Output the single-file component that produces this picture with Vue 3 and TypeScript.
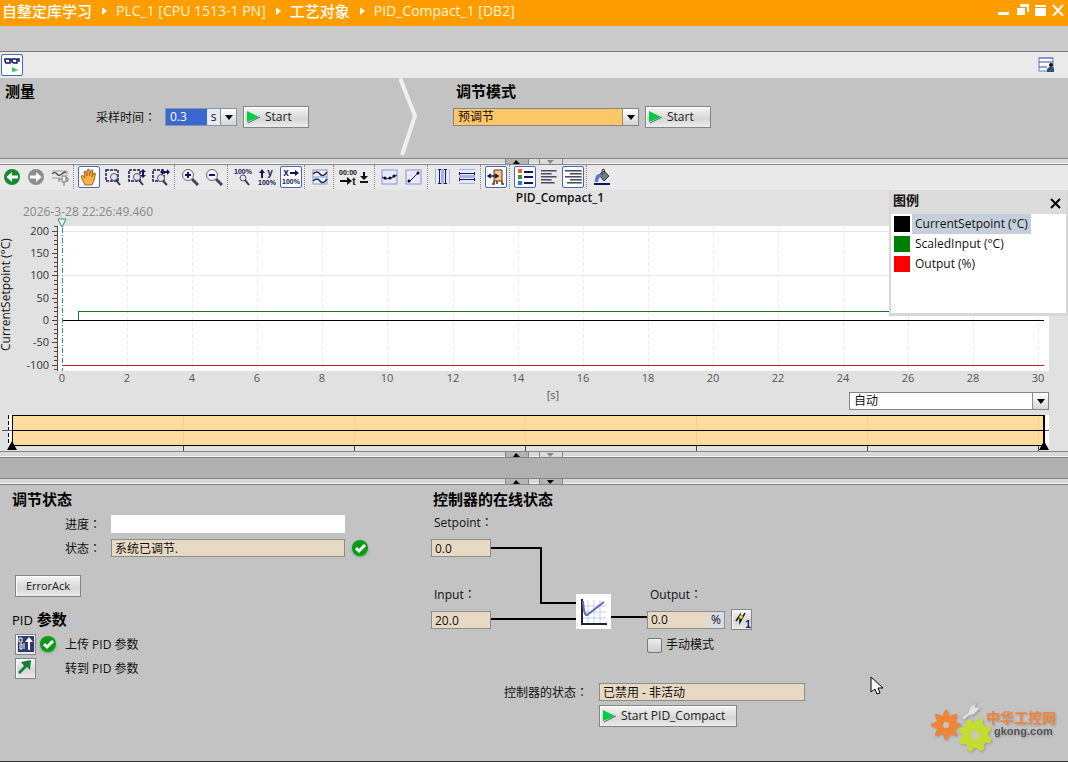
<script setup lang="ts">
import { computed, onBeforeUnmount, onMounted, ref } from 'vue'

interface Series {
  name: string
  color: string
}

const crumbs = ['自整定库学习', 'PLC_1 [CPU 1513-1 PN]', '工艺对象', 'PID_Compact_1 [DB2]']
const series: Series[] = [
  { name: 'CurrentSetpoint (°C)', color: '#000000' },
  { name: 'ScaledInput (°C)', color: '#008000' },
  { name: 'Output (%)', color: '#ff0000' },
]

const sampleTime = ref('0.3')
const tuningMode = ref('预调节')
const viewMode = ref('自动')
const manual = ref(false)
const selected = ref(0)

const chart = ref<HTMLElement | null>(null)
const width = ref(1068)
let observer: ResizeObserver | undefined

onMounted(() => {
  if (!chart.value) return
  width.value = chart.value.clientWidth
  observer = new ResizeObserver(() => {
    if (chart.value) width.value = chart.value.clientWidth
  })
  observer.observe(chart.value)
})
onBeforeUnmount(() => observer?.disconnect())

const left = 62
const right = computed(() => width.value - 24)
const plotEnd = computed(() => width.value - 19)
const x = (t: number) => Math.round(left + (t / 30.17) * (right.value - left))
const y = (v: number) => Math.round(130 - v * 0.4467)

const xTicks = Array.from({ length: 16 }, (_, i) => i * 2)
const yTicks = [200, 150, 100, 50, 0, -50, -100]
const minorTicks = Array.from({ length: 33 }, (_, i) => 210 - i * 10)
const overviewTicks = computed(() => [1, 2, 3, 4, 5, 6].map((i) => Math.round(12 + (i * (right.value - 12)) / 6.035)))
</script>

<template>
  <main class="app">
    <header class="titlebar">
      <nav class="crumbs">
        <template v-for="(c, i) in crumbs" :key="c">
          <svg v-if="i" class="sep" width="6" height="10" viewBox="0 0 6 10"><path d="M0 1l5 4-5 4z" fill="#fff" /></svg>
          <span :class="i % 2 ? 'latin' : 'han'">{{ c }}</span>
        </template>
      </nav>
      <div class="winbtns">
        <button aria-label="最小化"><svg width="16" height="16"><path d="M2 12h11v3H2z" fill="#fff" /></svg></button>
        <button aria-label="浮动"><svg width="16" height="16"><path d="M6 4h9v8h-2V7H6zM3 8h8v7H3z" fill="#fff" /></svg></button>
        <button aria-label="最大化"><svg width="16" height="16"><path d="M3 5h11v2H3zM3 8h11v8H3z" fill="#fff" /></svg></button>
        <button aria-label="关闭"><svg width="16" height="16"><path d="M3 5l10 11M13 5L3 16" stroke="#fff" stroke-width="2" /></svg></button>
      </div>
    </header>
    <div class="band"></div>
    <div class="bar">
      <button class="tool on" aria-label="全部监视">
        <svg width="18" height="18" viewBox="0 0 18 18">
          <path d="M2 3h5v4H3L2 5zM9 3h4l1 1v3h-3L9 6zM7 4h2M14 3h2v3" fill="none" stroke="#15155c" stroke-width="1.5" />
          <path d="M9 11l6 3-6 2z" fill="#3c6" /><path d="M9 16l6-2" stroke="#9b8" stroke-width="1" />
        </svg>
      </button>
      <button class="plain" aria-label="保存窗口设置">
        <svg width="18" height="18" viewBox="0 0 18 18">
          <rect x="2" y="2" width="14" height="13" fill="#fff" stroke="#667ab8" />
          <path d="M2 6h14M2 11h8" stroke="#334d9c" /><path d="M2 2h14" stroke="#7767c8" />
          <circle cx="14" cy="9" r="2" fill="#111" /><path d="M10 16v-3l2-2h4l1 2v3z" fill="#2c5288" />
        </svg>
      </button>
    </div>

    <section class="top">
      <div class="measure">
        <h2>测量</h2>
        <div class="row sample">
          <label for="sample">采样时间<i>：</i></label>
          <div class="num">
            <input id="sample" v-model="sampleTime" /><span>s</span>
            <button aria-label="选择采样时间"><svg width="8" height="5"><path d="M0 0h8L4 5z" /></svg></button>
          </div>
          <button class="btn start"><svg width="14" height="14"><path d="M1 1l12 6-12 5z" fill="#0c4" /><path d="M2 13l12-6" stroke="#567" /></svg>Start</button>
        </div>
      </div>
      <svg class="chevron" width="18" height="78" viewBox="0 0 18 78"><path d="M1 0l15 38-13 39" fill="none" stroke="#efefef" stroke-width="4" /></svg>
      <div class="mode">
        <h2>调节模式</h2>
        <div class="row">
          <div class="combo orange">
            <select v-model="tuningMode" aria-label="调节模式"><option>预调节</option><option>精确调节</option></select>
            <span class="drop"><svg width="8" height="5"><path d="M0 0h8L4 5z" /></svg></span>
          </div>
          <button class="btn start"><svg width="14" height="14"><path d="M1 1l12 6-12 5z" fill="#0c4" /><path d="M2 13l12-6" stroke="#567" /></svg>Start</button>
        </div>
      </div>
    </section>

    <div class="split">
      <button aria-label="向上"><svg width="8" height="4"><path d="M0 4h7L3 0z" /></svg></button>
      <button class="off" aria-label="向下"><svg width="8" height="4"><path d="M0 0h7L3 4z" fill="#888" /></svg></button>
    </div>

    <div class="tools">
      <div class="group">
        <button class="tool" aria-label="后退"><svg viewBox="0 0 18 18"><circle cx="9" cy="9" r="8" fill="#178a2e" /><path d="M15 7.500H9V4L3.500 9 9 14v-3.500h6z" fill="#fff" /></svg></button>
        <button class="tool" aria-label="前进"><svg viewBox="0 0 18 18"><circle cx="9" cy="9" r="8" fill="#8e8e8e" /><path d="M3 7.500h6V4l5.500 5L9 14v-3.500H3z" fill="#fff" /></svg></button>
        <button class="tool" aria-label="固定曲线"><svg viewBox="0 0 18 18"><path d="M1 3h15v5M1 10h6" fill="none" stroke="#999" /><path d="M1 6q3-3 5 0t6-1l3-1" fill="none" stroke="#555" stroke-width="1.500" /><path d="M8 9v5M8 11h3M11 8h4v6h-4zM15 10h2v3h-2M13 14v4" fill="#eee" stroke="#777" /></svg></button>
      </div>
      <i class="bar-sep"></i>
      <div class="group">
        <button class="tool on" aria-label="移动视图"><svg viewBox="0 0 18 18"><path d="M5 17L2 11 1 8l2-.5L5 10 4 4l1.500-1L7 8V2l2-1 .5 7L11 2l2 .5L12 9l1.500-4 2 .5-1.500 7-2 4.500z" fill="#f4b24a" stroke="#a4661c" /></svg></button>
        <button class="tool" aria-label="缩放选区"><svg viewBox="0 0 18 18"><rect x="2" y="2" width="12" height="11" fill="none" stroke="#15155c" stroke-width="1.500" stroke-dasharray="3 1" /><circle cx="10" cy="9" r="3.500" fill="#dfe6f4" stroke="#556" /><path d="M12 12l4 5" stroke="#334" stroke-width="2" /></svg></button>
        <button class="tool" aria-label="垂直缩放选区"><svg viewBox="0 0 18 18"><rect x="1" y="2" width="11" height="11" fill="none" stroke="#15155c" stroke-width="1.500" stroke-dasharray="3 1" /><circle cx="9" cy="9" r="3.500" fill="#dfe6f4" stroke="#556" /><path d="M11 12l4 5" stroke="#334" stroke-width="2" /><path d="M15 1l3 3h-2v3h2l-3 3-3-3h2V4h-2z" fill="#15155c" /></svg></button>
        <button class="tool" aria-label="水平缩放选区"><svg viewBox="0 0 18 18"><rect x="1" y="2" width="11" height="11" fill="none" stroke="#15155c" stroke-width="1.500" stroke-dasharray="3 1" /><circle cx="9" cy="10" r="3.500" fill="#dfe6f4" stroke="#556" /><path d="M11 13l4 4" stroke="#334" stroke-width="2" /><path d="M8 4l3-3v2h4V1l3 3-3 3V5h-4v2z" fill="#15155c" /></svg></button>
      </div>
      <i class="bar-sep"></i>
      <div class="group">
        <button class="tool" aria-label="放大"><svg viewBox="0 0 18 18"><path d="M11 11l6 6" stroke="#446" stroke-width="3" /><circle cx="7" cy="7" r="5.500" fill="#eef2ff" stroke="#667" /><path d="M4 7h6M7 4v6" stroke="#15155c" stroke-width="2" /></svg></button>
        <button class="tool" aria-label="缩小"><svg viewBox="0 0 18 18"><path d="M11 11l6 6" stroke="#446" stroke-width="3" /><circle cx="7" cy="7" r="5.500" fill="#eef2ff" stroke="#667" /><path d="M4 7h6" stroke="#15155c" stroke-width="2" /></svg></button>
      </div>
      <i class="bar-sep"></i>
      <div class="group">
        <button class="tool" aria-label="显示全部"><svg viewBox="0 0 18 18"><text x="9" y="6" class="tiny">100%</text><circle cx="9" cy="10" r="3" fill="#dfe6f4" stroke="#556" /><path d="M11 12l4 5" stroke="#334" stroke-width="2" /></svg></button>
        <button class="tool" aria-label="Y 轴全部"><svg viewBox="0 0 18 18"><path d="M4 1l3 4H5v5H3V5H1z" fill="#15155c" /><text x="12" y="8" class="tiny big">y</text><text x="9" y="17" class="tiny">100%</text></svg></button>
        <button class="tool on" aria-label="X 轴全部"><svg viewBox="0 0 18 18"><path d="M8 4h5V2l4 3-4 3V6H8z" fill="#15155c" /><text x="4" y="8" class="tiny big">x</text><text x="9" y="16" class="tiny">100%</text></svg></button>
      </div>
      <i class="bar-sep"></i>
      <div class="group">
        <button class="tool" aria-label="曲线"><svg viewBox="0 0 18 18"><rect x="2" y="2" width="14" height="14" fill="#eef0ff" stroke="#8a92d8" /><path d="M2 6q4-4 7 0t7-2M2 13q4-4 7 0t7-2" fill="none" stroke="#234" stroke-width="1.500" /><path d="M2 9h14" stroke="#8a92d8" /></svg></button>
      </div>
      <i class="bar-sep"></i>
      <div class="group">
        <button class="tool wide" aria-label="时间格式"><svg viewBox="0 0 34 18"><text x="10" y="7" class="tiny dark">00:00</text><path d="M2 12h7V9l5 4-5 4v-3H2z" fill="#111" /><text x="16" y="17" class="tiny big dark">t</text><path d="M25 4h2v4h3l-4 4-4-4h3zM22 13h8v2h-8z" fill="#111" /></svg></button>
      </div>
      <i class="bar-sep"></i>
      <div class="group">
        <button class="tool" aria-label="显示采样点"><svg viewBox="0 0 18 18"><rect x="1" y="2" width="15" height="14" fill="#e6e9ff" stroke="#8a92d8" /><path d="M1 9l4 2 5-1 6-3" fill="none" stroke="#15155c" /><circle cx="4" cy="10" r="1.500" /><circle cx="9" cy="10" r="1.500" /><circle cx="13" cy="8" r="1.500" /></svg></button>
        <button class="tool" aria-label="线性插值"><svg viewBox="0 0 18 18"><rect x="1" y="2" width="15" height="14" fill="#e6e9ff" stroke="#8a92d8" /><path d="M4 14L14 4" stroke="#15155c" /><circle cx="4" cy="13" r="1.500" /><circle cx="13" cy="5" r="1.500" /></svg></button>
      </div>
      <i class="bar-sep"></i>
      <div class="group">
        <button class="tool" aria-label="垂直标尺"><svg viewBox="0 0 18 18" shape-rendering="crispEdges"><path d="M1 1h15v15H1z" fill="#e6e9ff" /><path d="M1 1h1v15H1zM15 1h1v15h-1zM7 1h3v15H7z" fill="#a8b0e4" /><path d="M5 2h1v13H5zM11 2h1v13h-1zM4 1h3v1H4zM10 1h3v1h-3zM4 15h3v1H4zM10 15h3v1h-3z" fill="#15155c" /></svg></button>
        <button class="tool" aria-label="水平标尺"><svg viewBox="0 0 18 18" shape-rendering="crispEdges"><path d="M1 1h16v15H1z" fill="#e6e9ff" /><path d="M1 1h16v1H1zM1 15h16v1H1zM1 7h16v3H1z" fill="#a8b0e4" /><path d="M2 5h14v1H2zM2 11h14v1H2zM1 4h1v3H1zM1 10h1v3H1zM16 4h1v3h-1zM16 10h1v3h-1z" fill="#15155c" /></svg></button>
      </div>
      <i class="bar-sep"></i>
      <div class="group">
        <button class="tool on" aria-label="标尺窗口"><svg viewBox="0 0 18 18"><path d="M7 2h8v11H7z" fill="#f6c887" stroke="#5b3210" /><path d="M7 13v3H5M15 13v3h2M10 13v3" fill="none" stroke="#5b3210" stroke-width="1.500" /><path d="M1 8h10M4 6L1 8l3 2M8 6l3 2-3 2" fill="none" stroke="#15155c" stroke-width="1.500" /></svg></button>
      </div>
      <i class="bar-sep"></i>
      <div class="group">
        <button class="tool on" aria-label="显示图例"><svg viewBox="0 0 18 18"><rect x="2" y="1" width="4" height="4" fill="#e76a24" /><rect x="2" y="7" width="4" height="4" fill="#2a9a4a" /><rect x="2" y="13" width="4" height="4" fill="#2a78d0" /><path d="M8 4h9M8 9h9M8 15h9" stroke="#15155c" stroke-width="2" /></svg></button>
        <button class="tool" aria-label="左对齐"><svg viewBox="0 0 18 18" shape-rendering="crispEdges"><path d="M1 2h15v1H1zM1 5h10v1H1zM1 8h15v1H1zM1 11h10v1H1zM1 14h13v1H1z" fill="#4c4c60" stroke="#9a9aa8" stroke-width="1" paint-order="stroke" /></svg></button>
        <button class="tool on" aria-label="右对齐"><svg viewBox="0 0 18 18" shape-rendering="crispEdges"><path d="M1 2h16v1H1zM6 5h11v1H6zM1 8h16v1H1zM6 11h11v1H6zM3 14h14v1H3z" fill="#4c4c60" stroke="#9a9aa8" stroke-width="1" paint-order="stroke" /></svg></button>
      </div>
      <i class="bar-sep"></i>
      <div class="group">
        <button class="tool" aria-label="背景颜色"><svg viewBox="0 0 18 18"><path d="M1 15h16v2H1z" fill="#15155c" /><path d="M6 7l5-4 5 5-5 5z" fill="#707a88" stroke="#334" /><path d="M9 7V2l2-1 1 4" fill="none" stroke="#334" /><path d="M2 14q0-8 4-8l3 2-3 2-1 4z" fill="#5879cf" /></svg></button>
      </div>
    </div>

    <section ref="chart" class="chart">
      <svg class="plot" :width="width" height="261" shape-rendering="crispEdges">
        <text x="560" y="12" class="ct" text-anchor="middle">PID_Compact_1</text>
        <text x="23" y="26" class="stamp">2026-3-28 22:26:49.460</text>
        <rect x="58" y="36" :width="plotEnd - 58" height="145" fill="#fff" />
        <rect v-for="v in [200, 100]" :key="'h' + v" x="58" :y="y(v)" :width="plotEnd - 58" height="1" fill="#e6e6e6" />
        <line v-for="t in xTicks.slice(1)" :key="'v' + t" :x1="x(t)" :x2="x(t)" y1="36" y2="181" stroke="#ececec" stroke-dasharray="4 2" />
        <rect x="57" y="36" width="1" height="145" fill="#5c4040" />
        <rect v-for="v in minorTicks" :key="'m' + v" x="54" :y="y(v)" width="3" height="1" fill="#5c4040" />
        <template v-for="v in yTicks" :key="'y' + v">
          <rect x="52" :y="y(v)" width="5" height="1" fill="#5c4040" />
          <text x="49" :y="y(v) + 4" class="lab" text-anchor="end">{{ v }}</text>
        </template>
        <text v-for="t in xTicks" :key="'x' + t" :x="x(t)" y="192" class="lab grey" text-anchor="middle">{{ t }}</text>
        <text x="553" y="209" class="lab grey" text-anchor="middle">[s]</text>
        <text class="lab axis" transform="translate(10 161) rotate(-90)">CurrentSetpoint (°C)</text>
        <rect x="78" :y="y(20)" width="1" :height="y(0) - y(20)" fill="#15722f" />
        <rect x="78" :y="y(20)" :width="right - 78" height="1" fill="#15722f" />
        <rect :x="left" :y="y(0)" :width="right - left" height="1" />
        <rect :x="left" :y="y(-100)" :width="right - left" height="1" fill="#c02020" />
        <line x1="62" x2="62" y1="38" y2="181" stroke="#16a0a0" stroke-dasharray="5 2 1 2" />
        <path d="M58 29h8l-4 8z" fill="#fff" stroke="#189090" shape-rendering="auto" />

        <rect x="8" y="225" width="4" height="30" fill="#fff" />
        <rect :x="right" y="225" width="5" height="30" fill="#fff" />
        <path d="M8 225v30" stroke="#000" stroke-dasharray="4 2" />
        <rect x="12" y="225" :width="right - 12" height="30" fill="#ffdb9c" />
        <path :d="`M2 240H${plotEnd}`" stroke="#555" />
        <path :d="`M12 225H${right}V255H12zM12 240H${right}`" fill="none" stroke="#000" />
        <rect :x="right - 1" y="225" width="2" height="30" />
        <template v-for="t in overviewTicks" :key="'o' + t">
          <rect :x="t" y="226" width="1" height="28" fill="#f3cf90" />
          <rect :x="t" y="256" width="1" height="5" fill="#444" />
          <rect :x="t" y="240" width="1" height="1" />
        </template>
        <path :d="`M7 260l5-9 5 9zM${right - 5} 260l5-9 5 9z`" shape-rendering="auto" />
      </svg>
      <div class="combo view">
        <select v-model="viewMode" aria-label="显示方式"><option>自动</option><option>手动</option></select>
        <span class="drop"><svg width="8" height="5"><path d="M0 0h8L4 5z" /></svg></span>
      </div>
      <aside class="legend">
        <header>
          <h3>图例</h3>
          <button aria-label="关闭图例"><svg width="11" height="11"><path d="M1 1l9 9M10 1l-9 9" stroke="#000" stroke-width="2" /></svg></button>
        </header>
        <ul>
          <li v-for="(s, i) in series" :key="s.name" :class="{ sel: i === selected }" @click="selected = i">
            <svg width="16" height="16"><rect width="16" height="16" :fill="s.color" /></svg><span>{{ s.name }}</span>
          </li>
        </ul>
      </aside>
    </section>

    <div class="split">
      <button aria-label="向上"><svg width="8" height="4"><path d="M0 4h7L3 0z" /></svg></button>
      <button class="off" aria-label="向下"><svg width="8" height="4"><path d="M0 0h7L3 4z" fill="#888" /></svg></button>
    </div>
    <div class="gap"></div>
    <div class="split">
      <button aria-label="向上"><svg width="8" height="4"><path d="M0 4h7L3 0z" /></svg></button>
      <button aria-label="向下"><svg width="8" height="4"><path d="M0 0h7L3 4z" /></svg></button>
    </div>

    <section class="bottom">
      <div class="status">
        <h2>调节状态</h2>
        <div class="row line first">
          <label for="progress">进度<i>：</i></label>
          <input id="progress" class="field white" readonly />
        </div>
        <div class="row line">
          <label for="state">状态<i>：</i></label>
          <input id="state" class="field" value="系统已调节." readonly />
          <svg class="ok" width="18" height="18" viewBox="0 0 18 18"><circle cx="9" cy="9" r="8" fill="#0a9a18" /><path d="M5 9l3 3 6-6" fill="none" stroke="#fff" stroke-width="3" /></svg>
        </div>
        <button class="btn ack">ErrorAck</button>
        <h2 class="pid"><span>PID</span> 参数</h2>
        <div class="row act">
          <button class="btn sq" aria-label="上传 PID 参数">
            <svg width="18" height="18" viewBox="0 0 18 18"><path d="M1 1h16v16H1z" fill="#303a6c" /><path d="M2 3h3v4H2zM3 9h2v5H3zM7 8v6" fill="none" stroke="#fff" /><path d="M12 2l4 5h-3v8h-2V7H8z" fill="#fff" /></svg>
          </button>
          <svg class="ok" width="18" height="18" viewBox="0 0 18 18"><circle cx="9" cy="9" r="8" fill="#0a9a18" /><path d="M5 9l3 3 6-6" fill="none" stroke="#fff" stroke-width="3" /></svg>
          <span>上传 PID 参数</span>
        </div>
        <div class="row act">
          <button class="btn sq" aria-label="转到 PID 参数">
            <svg width="18" height="18" viewBox="0 0 18 18"><path d="M1 13l6-6-3-4 10-2-1 10-3-3-7 7z" fill="#15803a" /></svg>
          </button>
          <svg width="18" height="18"></svg>
          <span>转到 PID 参数</span>
        </div>
      </div>

      <div class="online">
        <h2>控制器的在线状态</h2>
        <div class="diagram">
          <svg class="wires" width="240" height="140" fill="none" stroke="#000" stroke-width="2"><path d="M60 39h50v55h35M60 110h85M179 108h37" /></svg>
          <label for="sp" class="n-l1">Setpoint<i>：</i></label>
          <input id="sp" class="field n-sp" value="0.0" readonly />
          <label for="in" class="n-l2">Input<i>：</i></label>
          <input id="in" class="field n-in" value="20.0" readonly />
          <svg class="n-pid" width="35" height="35" viewBox="0 0 35 35">
            <path d="M0 0h35v35H0z" fill="#fff" /><path d="M12 6v24M18 6v24M24 6v24M6 12h24M6 18h24M6 24h24" stroke="#c5cdf0" />
            <path d="M6 5v25h25" fill="none" stroke="#222238" stroke-width="2" /><path d="M7 7q1 15 4 14L28 8" fill="none" stroke="#656bb8" stroke-width="2" />
          </svg>
          <label for="out" class="n-l3">Output<i>：</i></label>
          <div class="field n-out"><input id="out" value="0.0" readonly /><span>%</span></div>
          <button class="btn sq n-act" aria-label="修改为 1">
            <svg width="18" height="18" viewBox="0 0 18 18"><path d="M3 10l4-6v7l5-9" fill="none" stroke="#111" stroke-width="1.500" /><circle cx="8" cy="6" r="2" fill="#f1e02c" stroke="#553" stroke-width=".5" /><text x="15" y="17" class="tiny big">1</text></svg>
          </button>
          <label class="n-man"><input v-model="manual" type="checkbox" />手动模式</label>
        </div>
        <div class="row ctl">
          <label for="cs">控制器的状态<i>：</i></label>
          <input id="cs" class="field" value="已禁用 - 非活动" readonly />
        </div>
        <button class="btn start pidgo"><svg width="14" height="14"><path d="M1 1l12 6-12 5z" fill="#0c4" /><path d="M2 13l12-6" stroke="#567" /></svg>Start PID_Compact</button>
      </div>

      <svg class="cursor" width="14" height="20" viewBox="0 0 14 20"><path d="M1 1v15l4-3 2 5 3-1-2-5h5z" fill="#fff" stroke="#000" /></svg>
      <div class="brand">
        <svg width="66" height="54" viewBox="0 0 66 54">
          <path d="M32 16l6-4 2-6 6-4-1 4 5 1-6 6-6 2-4 4z" fill="#e2e2e2" stroke="#bbb" />
          <g fill="#f08438">
            <circle cx="16" cy="24" r="10" />
            <path v-for="a in [0, 45, 90, 135, 180, 225, 270, 315]" :key="a" d="M12 16l3-7h2l3 7z" :transform="`rotate(${a} 16 24)`" />
          </g>
          <circle cx="16" cy="24" r="3" fill="#c4c4c4" />
          <g fill="#c3dc32">
            <circle cx="45" cy="34" r="13" />
            <path v-for="a in [20, 65, 110, 155, 200, 245, 290, 335]" :key="a" d="M40 24l3-7h4l3 7z" :transform="`rotate(${a} 45 34)`" />
          </g>
          <circle cx="45" cy="34" r="4" fill="#c4c4c4" />
        </svg>
        <p><b>中华工控网</b><span>gkong.com</span></p>
      </div>
    </section>
  </main>
</template>

<style>
body { background: #c3c3c3; }
</style>

<style scoped>
* { box-sizing: border-box; }
.app { font: 12px/16px "Open Sans", "Noto Sans CJK SC", sans-serif; color: #111; min-height: 100vh; display: flex; flex-direction: column; overflow: hidden; }
button, input, select { font: inherit; color: inherit; margin: 0; padding: 0; border: 0; background: none; border-radius: 0; outline: 0; }
button { display: flex; align-items: center; justify-content: center; }
svg { display: block; flex: none; }
h2, h3, p, ul { margin: 0; padding: 0; list-style: none; }
h2 { font-size: 15px; line-height: 20px; font-weight: 700; color: #000; }
i { font-style: normal; font-family: "Noto Sans CJK TC", sans-serif; }
.row { display: flex; align-items: center; }

.titlebar { height: 26px; background: #ff9d00; display: flex; justify-content: space-between; align-items: flex-start; }
.crumbs { display: flex; align-items: center; height: 22px; padding-left: 2px; color: #fff; font-weight: 500; }
.crumbs .sep { margin: 0 8px 0 10px; }
.han { font-size: 15px; }
.latin { font-size: 14px; color: #fff6d8; font-weight: 500; }
.winbtns { display: flex; gap: 2px; padding-right: 2px; }
.band { height: 26px; background: #cbcbcb; border-bottom: 1px solid #777; }
.bar { height: 26px; background: #eaeaea; display: flex; align-items: center; justify-content: space-between; padding: 0 13px 0 0; }
.tool { width: 22px; height: 22px; margin: 0 1px; border: 1px solid transparent; border-radius: 2px; }
.tool svg { width: 18px; height: 18px; }
.tool.on { background: #fff; border-color: #4468b8; }
.tool.wide { width: 34px; }
.tool.wide svg { width: 34px; }

.top { height: 80px; background: #c3c3c3; display: grid; grid-template-columns: 399px 18px 1fr; }
.measure { padding: 3px 0 0 5px; }
.mode { padding: 3px 0 0 36px; }
.top .row { margin-top: 5px; height: 22px; }
.mode h2 { padding-left: 3px; }
.sample { padding-left: 91px; }
.sample label { width: 69px; }
.num { display: flex; width: 72px; height: 18px; border: 1px solid #8a94a8; background: #e6eaf2; margin-right: 6px; }
.num input { width: 41px; background: #3a68d0; color: #fff; padding-left: 4px; }
.num span { flex: 1; text-align: center; }
.num button, .drop { width: 16px; background: linear-gradient(#fff, #d4d4d4); border-left: 1px solid #8a8a8a; }
.btn { height: 22px; border: 1px solid #858585; background: linear-gradient(#f6f6f6, #d6d6d6 60%, #ececec); box-shadow: inset 1px 1px #fff; color: #222; }
.start { width: 66px; justify-content: flex-start; padding-left: 2px; gap: 5px; }
.combo { position: relative; height: 18px; width: 186px; margin-right: 6px; border: 1px solid #858585; background: #fff; }
.combo select { appearance: none; width: 100%; height: 16px; padding-left: 4px; display: block; line-height: 16px; }
.combo.orange { background: #ffc768; }
.drop { position: absolute; right: 0; top: 0; height: 16px; display: flex; align-items: center; justify-content: center; pointer-events: none; }

.split { height: 7px; background: #d9d9d9; border-top: 1px solid #858585; border-bottom: 1px solid #858585; box-shadow: inset 0 -1px #f4f4f4; display: flex; justify-content: center; gap: 10px; }
.split button { width: 24px; height: 5px; background: #b4b4b4; border: solid #858585; border-width: 0 1px; }
.split .off { background: #dcdcdc; }
.tools { height: 25px; background: #e9e9e9; display: flex; align-items: center; padding-bottom: 1px; }
.group { display: flex; }
.bar-sep { width: 1px; height: 24px; margin: 0 3px 0 1px; border-left: 1px dotted #888; }
.tiny { font: 700 7px "Liberation Sans", sans-serif; text-anchor: middle; fill: #15155c; }
.tiny.big { font-size: 10px; }
.tiny.dark { fill: #111; }

.chart { position: relative; height: 261px; background: #e1e1e1; }
.ct { font-size: 12px; font-weight: 600; fill: #111; }
.stamp { fill: #888; font-size: 12px; }
.lab { fill: #333; font-size: 11px; }
.lab.grey { fill: #555; }
.lab.axis { font-size: 12px; fill: #111; }
.view { position: absolute; right: 19px; top: 202px; width: 200px; margin: 0; }
.legend { position: absolute; right: 0; top: 0; width: 179px; height: 126px; background: #fff; border: solid #d7d7d7; border-width: 0 2px 3px 2px; }
.legend header { height: 24px; background: #dcdcdc; display: flex; justify-content: space-between; padding: 0 5px 0 2px; }
.legend h3 { font-size: 13px; line-height: 20px; }
.legend header button { align-self: flex-end; padding-bottom: 5px; }
.legend li { display: flex; height: 20px; align-items: center; padding-left: 3px; gap: 2px; }
.legend li span { padding: 0 3px; line-height: 20px; }
.legend li.sel span { background: #c5cfdc; }

.gap { height: 20px; background: #b0b0b0; }
.bottom { position: relative; flex: 1; background: #c3c3c3; border-bottom: 1px solid #333; display: grid; grid-template-columns: 431px 1fr; }
.status { padding: 4px 0 0 12px; }
.field { height: 18px; border: 1px solid #8c8c8c; background: #e8d9c2; padding: 0 3px; line-height: 16px; }
.line { height: 24px; padding-left: 53px; }
.line.first { margin-top: 3px; }
.line label { width: 46px; }
.line .field { width: 234px; margin-right: 6px; }
.field.white { background: #fff; border-color: #fff; }
.ok { filter: drop-shadow(0 1px 1px #6a6); }
.ack { margin: 15px 0 12px 3px; width: 66px; font-size: 11px; }
.pid { margin-bottom: 2px; }
.pid span { font-size: 13px; font-weight: 500; }
.act { height: 24px; padding-left: 3px; gap: 3px; }
.act > span { margin-left: 5px; padding-top: 2px; }
.sq { width: 21px; height: 21px; }

.online { padding-top: 4px; }
.online h2 { padding-left: 2px; }
.diagram { position: relative; height: 171px; }
.diagram > * { position: absolute; }
.wires { left: 0; top: 0; }
.n-l1 { left: 3px; top: 5px; }
.n-sp { left: 0; top: 30px; width: 60px; }
.n-l2 { left: 3px; top: 77px; }
.n-in { left: 0; top: 102px; width: 60px; }
.n-pid { left: 145px; top: 85px; }
.n-l3 { left: 219px; top: 77px; }
.n-out { left: 216px; top: 102px; width: 78px; display: flex; background: linear-gradient(90deg, #e8d9c2 76%, #d8dce4 80%); }
.n-out input { width: 60px; }
.n-act { left: 300px; top: 100px; }
.n-man { left: 216px; top: 128px; display: flex; align-items: center; gap: 4px; }
.n-man input { appearance: none; width: 15px; height: 15px; border: 1px solid #777; border-radius: 2px; background: linear-gradient(#eee, #ccc); }
.ctl { height: 24px; padding-left: 73px; }
.ctl label { width: 95px; }
.ctl .field { width: 206px; }
.pidgo { width: 138px; margin: 1px 0 0 168px; }
.cursor { position: absolute; left: 870px; top: 191px; }
.brand { position: absolute; right: 12px; bottom: 6px; display: flex; align-items: center; filter: drop-shadow(1px 1px 1px #999); }
.brand p { margin-left: -10px; margin-bottom: 8px; display: flex; flex-direction: column; }
.brand b { font-size: 14px; line-height: 15px; font-weight: 700; color: #f08438; }
.brand span { font: 700 11px/13px "Liberation Sans", sans-serif; color: #555; padding-left: 8px; }
</style>
